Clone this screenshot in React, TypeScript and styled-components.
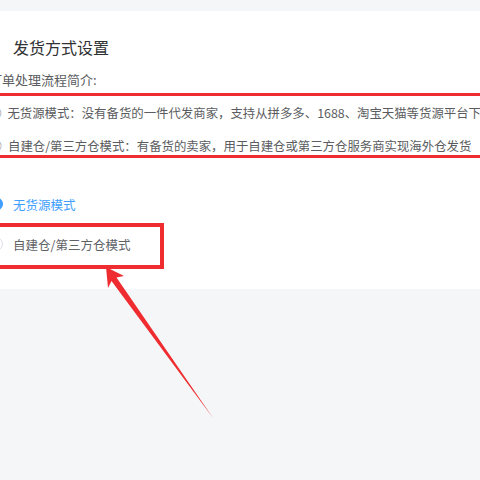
import React from 'react';
import styled, { createGlobalStyle } from 'styled-components';

const GlobalStyle = createGlobalStyle`
    html, body {
        margin: 0;
        padding: 0;
        background: #f5f6f8;
        overflow: hidden;
    }
    body {
        font-family: "Noto Sans CJK SC", "Noto Sans", "Liberation Sans", sans-serif;
        color: #606266;
    }
`;

const MARK_RED = '#ef2d30';

const Page = styled.div`
    position: relative;
    width: 480px;
    height: 480px;
    padding-top: 11px;
    box-sizing: border-box;
    overflow: hidden;
`;

// the card runs past the left edge of the window, like a scrolled panel
const Card = styled.div`
    margin-left: -11px;
    width: 520px;
    height: 278px;
    box-sizing: border-box;
    padding-top: 24px;
    background: #fff;
    display: flex;
    flex-direction: column;
`;

const Title = styled.h2`
    margin: 0 0 0 24px;
    font-size: 16px;
    line-height: 24px;
    font-weight: 400;
    color: #303133;
`;

const IntroLabel = styled.div`
    margin-top: 11px;
    font-size: 13px;
    line-height: 20px;
    color: #5a5c60;
`;

const ModeList = styled.ul`
    list-style: none;
    margin: 13px 0 0;
    padding: 0;
    display: flex;
    flex-direction: column;
    gap: 13px;
`;

const ModeItem = styled.li`
    display: flex;
    align-items: center;
    font-size: 12.4px;
    line-height: 20px;
    white-space: nowrap;
    color: #5a5c60;
`;

const CircledNum = styled.span`
    width: 13px;
    margin-right: 6px;
    text-align: center;
`;

const RadioGroup = styled.div`
    margin-top: 38px;
    display: flex;
    flex-direction: column;
    gap: 20px;
`;

const RadioRow = styled.label`
    display: flex;
    align-items: center;
    height: 20px;
    cursor: pointer;
`;

const RadioDot = styled.span<{ $checked?: boolean }>`
    width: 14px;
    height: 14px;
    box-sizing: border-box;
    border-radius: 50%;
    border: 1px solid ${p => (p.$checked ? '#409eff' : '#dcdfe6')};
    background: ${p => (p.$checked ? '#409eff' : '#fff')};
    display: flex;
    align-items: center;
    justify-content: center;
    &:after {
        content: '';
        width: 4px;
        height: 4px;
        border-radius: 50%;
        background: #fff;
        display: ${p => (p.$checked ? 'block' : 'none')};
    }
`;

const RadioText = styled.span<{ $checked?: boolean }>`
    margin-left: 10px;
    font-size: 12.5px;
    color: ${p => (p.$checked ? '#409eff' : '#606266')};
`;

// red marker boxes drawn over the form
const MarkBox = styled.div<{ $top: number; $left: number; $width: number; $height: number; $stroke: number }>`
    position: absolute;
    top: ${p => p.$top}px;
    left: ${p => p.$left}px;
    width: ${p => p.$width}px;
    height: ${p => p.$height}px;
    box-sizing: border-box;
    border: ${p => p.$stroke}px solid ${MARK_RED};
    pointer-events: none;
`;

const ArrowLayer = styled.svg`
    position: absolute;
    top: 0;
    left: 0;
    pointer-events: none;
`;

const modes = [
    { num: '①', text: '无货源模式：没有备货的一件代发商家，支持从拼多多、1688、淘宝天猫等货源平台下单发货' },
    { num: '②', text: '自建仓/第三方仓模式：有备货的卖家，用于自建仓或第三方仓服务商实现海外仓发货' },
];

const options = [
    { label: '无货源模式', checked: true },
    { label: '自建仓/第三方仓模式', checked: false },
];

const App = () => {
    return (
        <>
            <GlobalStyle />
            <Page>
                <Card>
                    <Title>发货方式设置</Title>
                    <IntroLabel>订单处理流程简介:</IntroLabel>
                    <ModeList>
                        {modes.map(m => (
                            <ModeItem key={m.num}>
                                <CircledNum>{m.num}</CircledNum>
                                {m.text}
                            </ModeItem>
                        ))}
                    </ModeList>
                    <RadioGroup>
                        {options.map(o => (
                            <RadioRow key={o.label}>
                                <RadioDot $checked={o.checked} />
                                <RadioText $checked={o.checked}>{o.label}</RadioText>
                            </RadioRow>
                        ))}
                    </RadioGroup>
                </Card>

                <MarkBox $top={93} $left={-10} $width={500} $height={65} $stroke={3} />
                <MarkBox $top={223} $left={-10} $width={174} $height={46} $stroke={4} />

                <ArrowLayer width="480" height="480" viewBox="0 0 480 480">
                    <polygon
                        points="106,267 124,276 116.5,277.5 213,418 111.5,281 108,288"
                        fill={MARK_RED}
                    />
                </ArrowLayer>
            </Page>
        </>
    );
};

export default App;
